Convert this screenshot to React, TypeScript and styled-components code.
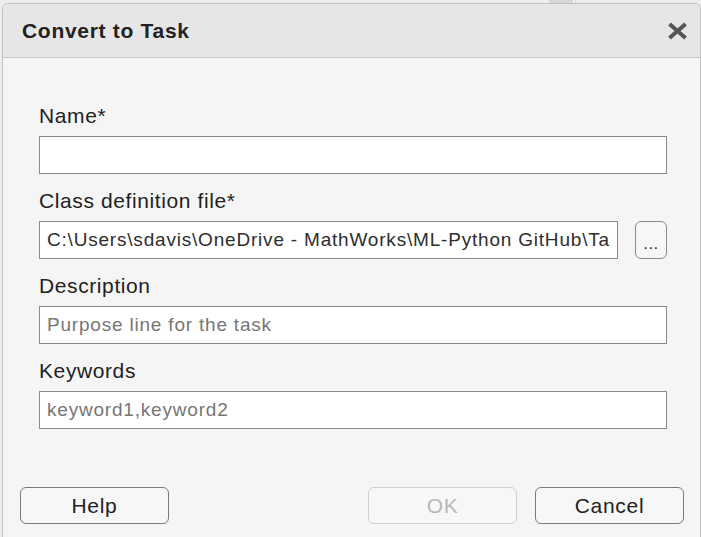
import React from "react";
import styled, { createGlobalStyle } from "styled-components";

const Global = createGlobalStyle`
  html, body { margin: 0; padding: 0; }
  body {
    width: 701px;
    height: 537px;
    overflow: hidden;
    background: #eeeeee;
    font-family: "Liberation Sans", Arial, sans-serif;
  }
  #root { height: 100%; }
`;

const Page = styled.div`
  display: flex;
  flex-direction: column;
  height: 100%;
`;

const TopStrip = styled.div`
  height: 3px;
  display: flex;
  flex-shrink: 0;
  padding-left: 549px;
  gap: 2px;
`;

const StripBlock = styled.div<{ $w: number; $c: string }>`
  width: ${(p) => p.$w}px;
  background: ${(p) => p.$c};
`;

const DialogWrap = styled.div`
  padding-left: 2px;
  flex: 1;
  display: flex;
`;

const Dialog = styled.div`
  width: 699px;
  box-sizing: border-box;
  border: 1px solid #c2c2c2;
  border-bottom: none;
  border-radius: 6px 6px 0 0;
  background: #f5f5f5;
  display: flex;
  flex-direction: column;
  overflow: hidden;
`;

const Header = styled.div`
  height: 53px;
  background: #e6e6e6;
  border-bottom: 1px solid #c8c8c8;
  display: flex;
  align-items: center;
  justify-content: space-between;
  padding: 0 10px 0 19px;
  flex-shrink: 0;
`;

const Title = styled.div`
  font-size: 21px;
  font-weight: bold;
  letter-spacing: 0.7px;
  color: #222222;
`;

const CloseButton = styled.button`
  width: 26px;
  height: 24px;
  border: none;
  background: transparent;
  padding: 0;
  display: flex;
  align-items: center;
  justify-content: center;
  cursor: pointer;
`;

const Body = styled.div`
  padding: 47px 33px 0 36px;
  display: flex;
  flex-direction: column;
  gap: 16px;
`;

const Field = styled.div`
  display: flex;
  flex-direction: column;
  gap: 9px;
`;

const Label = styled.label`
  font-size: 21px;
  letter-spacing: 0.6px;
  line-height: 22px;
  height: 22px;
  color: #222222;
`;

const InputRow = styled.div`
  display: flex;
  gap: 17px;
`;

const TextInput = styled.input`
  flex: 1;
  min-width: 0;
  height: 38px;
  box-sizing: border-box;
  border: 1px solid #8a8a8a;
  background: #ffffff;
  padding: 0 7px;
  font-family: "Liberation Sans", Arial, sans-serif;
  font-size: 19px;
  letter-spacing: 0.8px;
  color: #2e2e2e;
  outline: none;
  &::placeholder {
    color: #767676;
    opacity: 1;
  }
`;

const BrowseButton = styled.button`
  width: 32px;
  height: 38px;
  box-sizing: border-box;
  border: 1px solid #8a8a8a;
  border-radius: 6px;
  background: #f7f7f7;
  padding: 8px 0 0 0;
  font-family: "Liberation Sans", Arial, sans-serif;
  font-size: 17px;
  letter-spacing: 0.5px;
  color: #333333;
  flex-shrink: 0;
`;

const Footer = styled.div`
  margin-top: 58px;
  padding: 0 16px 0 17px;
  display: flex;
  gap: 18px;
`;

const Spacer = styled.div`
  flex: 1;
`;

const DialogButton = styled.button<{ $disabled?: boolean }>`
  width: 149px;
  height: 37px;
  box-sizing: border-box;
  border: 1px solid ${(p) => (p.$disabled ? "#d0d0d0" : "#7a7a7a")};
  border-radius: 6px;
  background: #f7f7f7;
  font-family: "Liberation Sans", Arial, sans-serif;
  font-size: 21px;
  letter-spacing: 0.7px;
  color: ${(p) => (p.$disabled ? "#b8b8b8" : "#222222")};
  padding: 0;
`;

const CloseIcon = () => (
  <svg width="21" height="18" viewBox="0 0 21 18">
    <path d="M2.5 2 L18.5 16 M18.5 2 L2.5 16" stroke="#555555" strokeWidth="4" />
  </svg>
);

export default function App() {
  return (
    <Page>
      <Global />
      <TopStrip>
        <StripBlock $w={24} $c="#d8d8d8" />
        <StripBlock $w={1} $c="#dcdcdc" />
      </TopStrip>
      <DialogWrap>
        <Dialog>
          <Header>
            <Title>Convert to Task</Title>
            <CloseButton aria-label="Close">
              <CloseIcon />
            </CloseButton>
          </Header>
          <Body>
            <Field>
              <Label>Name*</Label>
              <InputRow>
                <TextInput defaultValue="" />
              </InputRow>
            </Field>
            <Field>
              <Label>Class definition file*</Label>
              <InputRow>
                <TextInput defaultValue={"C:\\Users\\sdavis\\OneDrive - MathWorks\\ML-Python GitHub\\Tasks\\MyTask.m"} />
                <BrowseButton>...</BrowseButton>
              </InputRow>
            </Field>
            <Field>
              <Label>Description</Label>
              <InputRow>
                <TextInput placeholder="Purpose line for the task" />
              </InputRow>
            </Field>
            <Field>
              <Label>Keywords</Label>
              <InputRow>
                <TextInput placeholder="keyword1,keyword2" />
              </InputRow>
            </Field>
          </Body>
          <Footer>
            <DialogButton>Help</DialogButton>
            <Spacer />
            <DialogButton $disabled disabled>
              OK
            </DialogButton>
            <DialogButton>Cancel</DialogButton>
          </Footer>
        </Dialog>
      </DialogWrap>
    </Page>
  );
}
